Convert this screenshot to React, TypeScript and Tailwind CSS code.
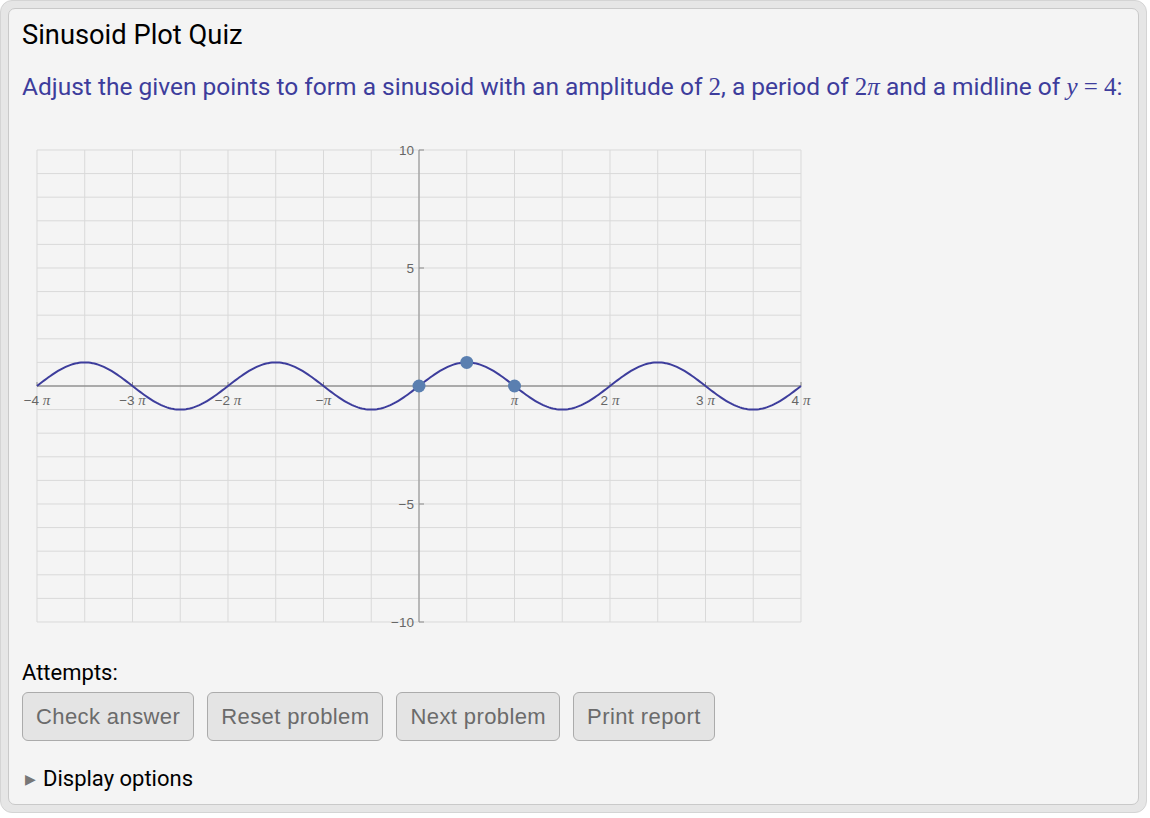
import React from "react";

// plot geometry in svg coordinates
const X0 = 15; // -4π
const X1 = 779; // 4π
const Y0 = 10; // y = 10
const Y1 = 482; // y = -10
const PI = Math.PI;

const sx = (x: number) => X0 + ((x + 4 * PI) / (8 * PI)) * (X1 - X0);
const sy = (y: number) => Y0 + ((10 - y) / 20) * (Y1 - Y0);

const curvePath = (() => {
  const pts: string[] = [];
  const n = 400;
  for (let i = 0; i <= n; i++) {
    const x = -4 * PI + (8 * PI * i) / n;
    pts.push(`${i === 0 ? "M" : "L"}${sx(x).toFixed(2)},${sy(Math.sin(x)).toFixed(2)}`);
  }
  return pts.join(" ");
})();

const xLabels = [
  { v: -4, n: "−4 " },
  { v: -3, n: "−3 " },
  { v: -2, n: "−2 " },
  { v: -1, n: "−" },
  { v: 1, n: "" },
  { v: 2, n: "2 " },
  { v: 3, n: "3 " },
  { v: 4, n: "4 " },
];

const yLabels = [
  { v: 10, t: "10" },
  { v: 5, t: "5" },
  { v: -5, t: "−5" },
  { v: -10, t: "−10" },
];

const Plot = () => {
  const vLines = Array.from({ length: 17 }, (_, i) => X0 + (i * (X1 - X0)) / 16);
  const hLines = Array.from({ length: 21 }, (_, i) => Y0 + (i * (Y1 - Y0)) / 20);
  const ox = sx(0);
  const oy = sy(0);

  return (
    <svg width="800" height="495" className="block">
      {vLines.map((x, i) => (
        <line key={"v" + i} x1={x} x2={x} y1={Y0} y2={Y1} stroke="#d9d9d9" strokeWidth="1" />
      ))}
      {hLines.map((y, i) => (
        <line key={"h" + i} x1={X0} x2={X1} y1={y} y2={y} stroke="#d9d9d9" strokeWidth="1" />
      ))}
      {/* axes */}
      <line x1={X0} x2={X1} y1={oy} y2={oy} stroke="#6f6f6f" strokeWidth="1" />
      <line x1={ox} x2={ox} y1={Y0} y2={Y1} stroke="#8a8a8a" strokeWidth="1" />
      {xLabels.map((l) => (
        <line key={"xt" + l.v} x1={sx(l.v * PI)} x2={sx(l.v * PI)} y1={oy - 4} y2={oy} stroke="#8a8a8a" />
      ))}
      {yLabels.map((l) => (
        <line key={"yt" + l.v} x1={ox} x2={ox + 5} y1={sy(l.v)} y2={sy(l.v)} stroke="#8a8a8a" />
      ))}
      {xLabels.map((l) => (
        <text
          key={"xl" + l.v}
          x={sx(l.v * PI)}
          y={oy + 19}
          textAnchor="middle"
          fontSize="13.5"
          fill="#666"
          fontFamily="'Liberation Sans', Arial, sans-serif"
        >
          {l.n}
          <tspan fontFamily="'Liberation Serif', serif" fontStyle="italic" fontSize="15">
            π
          </tspan>
        </text>
      ))}
      {yLabels.map((l) => (
        <text
          key={"yl" + l.v}
          x={ox - 5}
          y={sy(l.v) + 5}
          textAnchor="end"
          fontSize="13.5"
          fill="#666"
          fontFamily="'Liberation Sans', Arial, sans-serif"
        >
          {l.t}
        </text>
      ))}
      <path d={curvePath} fill="none" stroke="#3d3d9c" strokeWidth="2" />
      <circle cx={sx(0)} cy={sy(0)} r="6.5" fill="#5a7fb0" />
      <circle cx={sx(PI / 2)} cy={sy(1)} r="6.5" fill="#5a7fb0" />
      <circle cx={sx(PI)} cy={sy(0)} r="6.5" fill="#5a7fb0" />
    </svg>
  );
};

const Math_ = ({ children }: { children: React.ReactNode }) => (
  <span className="font-['Liberation_Serif',serif] text-[25px]">{children}</span>
);

const Btn = ({ label }: { label: string }) => (
  <button className="h-[49px] px-[13px] rounded-[6px] border border-[#ababab] bg-[#e4e4e4] text-[22px] tracking-[0.4px] text-[#6b6b6b] font-['Liberation_Sans',Arial,sans-serif]">
    {label}
  </button>
);

export default function App() {
  return (
    <div className="w-[1147px] h-[813px] rounded-[12px] border border-[#d4d4d4] bg-[#e6e6e6] p-[7px] font-['Roboto',sans-serif]">
      <div className="h-full rounded-[7px] border border-[#c9c9c9] bg-[#f4f4f4] px-[13px] pt-[10px]">
        <h1 className="text-[27.3px] leading-[32px] text-black">Sinusoid Plot Quiz</h1>
        <p className="mt-[20px] whitespace-nowrap text-[24.5px] leading-[32px] text-[#3d3d9c]">
          Adjust the given points to form a sinusoid with an amplitude of <Math_>2</Math_>, a period of{" "}
          <Math_>
            2<i>π</i>
          </Math_>{" "}
          and a midline of{" "}
          <Math_>
            <i>y</i> = 4
          </Math_>
          :
        </p>
        <div className="mt-[37px]">
          <Plot />
        </div>
        <div className="mt-[25px] text-[22px] leading-[26px] text-black">Attempts:</div>
        <div className="mt-[6px] flex gap-[13px]">
          <Btn label="Check answer" />
          <Btn label="Reset problem" />
          <Btn label="Next problem" />
          <Btn label="Print report" />
        </div>
        <div className="mt-[25px] flex items-center gap-[7px] text-[22px] leading-[26px] text-black">
          <span className="text-[14px] text-[#777] ml-[3px]">▶</span>
          <span>Display options</span>
        </div>
      </div>
    </div>
  );
}
